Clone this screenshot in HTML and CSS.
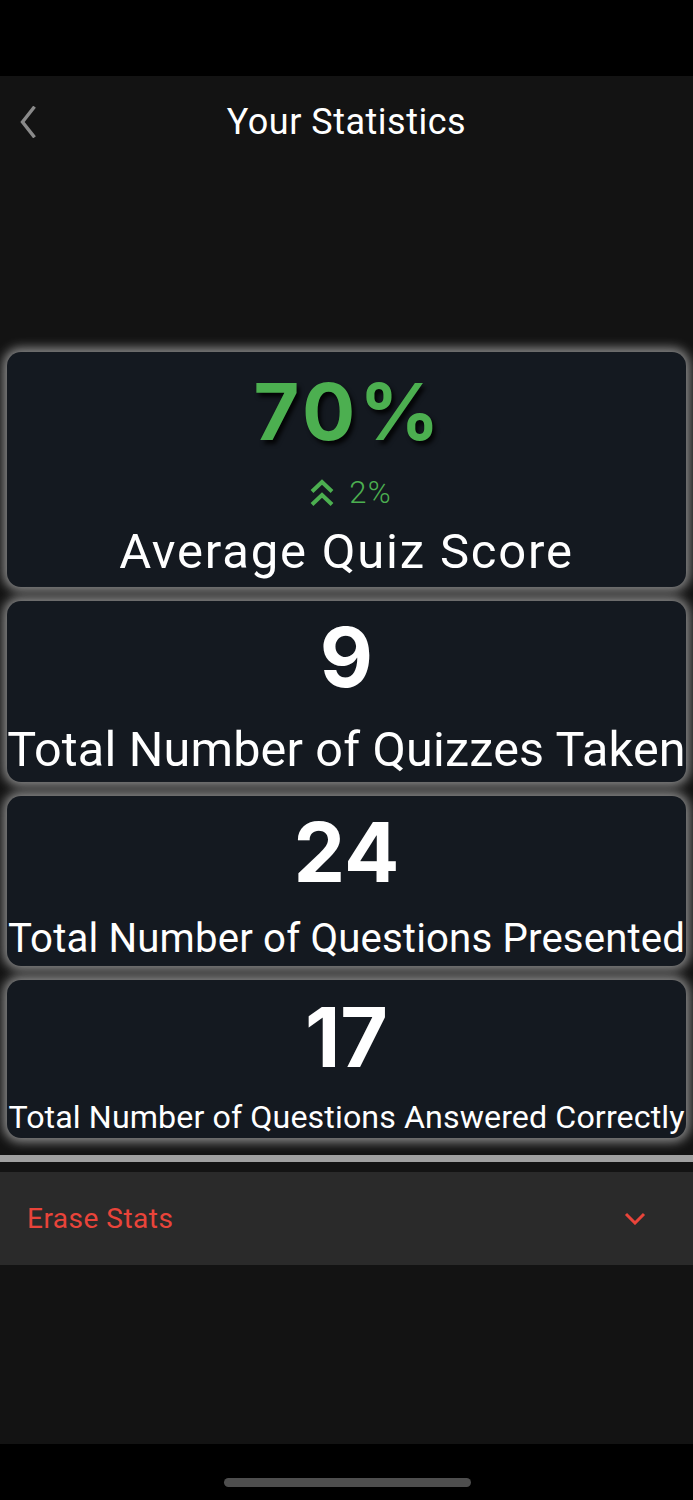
FILE: index.html
```html
<!DOCTYPE html>
<html>
<head>
<meta charset="utf-8">
<link rel="stylesheet" href="styles.css">
</head>
<body>
<div class="page">
  <div class="statusbar"></div>
  <header class="navbar">
    <div class="nav-left">
      <svg class="back" width="16" height="32" viewBox="0 0 16 32"><polyline points="13.5,2 2.5,16 13.5,30" fill="none" stroke="#8a8a8a" stroke-width="3.4" stroke-linecap="square"/></svg>
    </div>
    <div class="nav-title">Your Statistics</div>
    <div class="nav-right"></div>
  </header>
  <section class="stats">
    <div class="card card-1">
      <div class="num num-green">70%</div>
      <div class="trend">
        <svg class="trend-icon" width="26" height="28" viewBox="0 0 26 28"><polyline points="3,12.5 13,3 23,12.5" fill="none" stroke="#4caf50" stroke-width="4"/><polyline points="3,25.5 13,16 23,25.5" fill="none" stroke="#4caf50" stroke-width="4"/></svg>
        <span>2%</span>
      </div>
      <div class="label label-1">Average Quiz Score</div>
    </div>
    <div class="card card-2">
      <div class="num">9</div>
      <div class="label label-2">Total Number of Quizzes Taken</div>
    </div>
    <div class="card card-3">
      <div class="num">24</div>
      <div class="label label-3">Total Number of Questions Presented</div>
    </div>
    <div class="card card-4">
      <div class="num">17</div>
      <div class="label label-4">Total Number of Questions Answered Correctly</div>
    </div>
  </section>
  <div class="divider"></div>
  <div class="erase-row">
    <span class="erase-text">Erase Stats</span>
    <svg class="erase-chev" width="22" height="13" viewBox="0 0 22 13"><polyline points="2,2 11,11 20,2" fill="none" stroke="#e9443a" stroke-width="3"/></svg>
  </div>
  <div class="filler"></div>
  <div class="homebar"><div class="home-indicator"></div></div>
</div>
</body>
</html>
```

FILE: styles.css
```css
* { box-sizing: border-box; }
html, body {
  margin: 0;
  padding: 0;
  background: #131313;
}
.page {
  width: 693px;
  height: 1500px;
  display: flex;
  flex-direction: column;
  background: #131313;
  font-family: Roboto, "Liberation Sans", sans-serif;
  color: #ffffff;
  overflow: hidden;
}
.statusbar {
  height: 76px;
  flex: none;
  background: #000;
}
.navbar {
  height: 92px;
  flex: none;
  display: grid;
  grid-template-columns: 1fr auto 1fr;
  align-items: start;
}
.nav-left {
  padding: 30px 0 0 20px;
}
.back { display: block; }
.nav-title {
  padding-top: 25px;
  font-size: 36px;
  line-height: 42px;
  font-weight: 400;
  letter-spacing: 0.5px;
  color: #fff;
}
.stats {
  flex: none;
  padding: 184px 7px 17px;
  display: flex;
  flex-direction: column;
  gap: 14px;
}
.card {
  background: #141920;
  border-radius: 14px;
  box-shadow: 0 0 11px 4px #8c8c8c;
  display: flex;
  flex-direction: column;
  align-items: center;
  text-align: center;
}
.card-1 { height: 235px; padding-top: 20px; }
.card-2 { height: 181px; padding-top: 16px; }
.card-3 { height: 170px; padding-top: 16px; }
.card-4 { height: 158px; padding-top: 17px; }
.num {
  font-family: Inter, Roboto, sans-serif;
  font-weight: 700;
  font-size: 82px;
  line-height: 82px;
  color: #fff;
}
.num-green {
  font-size: 79px;
  line-height: 79px;
  color: #4caf50;
  letter-spacing: 4px;
  margin-right: -4px;
  text-shadow: 3px 4px 4px rgba(0, 0, 0, 0.85);
}
.trend {
  margin-top: 24px;
  display: flex;
  align-items: center;
  gap: 14px;
  height: 36px;
  color: #4caf50;
  font-size: 31px;
  line-height: 36px;
  font-weight: 300;
  letter-spacing: 1.2px;
  margin-left: 8px;
}
.trend-icon { display: block; }
.label {
  white-space: nowrap;
  line-height: 1.2;
  font-weight: 400;
  color: #fff;
}
.label-1 { font-size: 49px; margin-top: 12px; letter-spacing: 1.8px; }
.label-2 { font-size: 48.5px; margin-top: 22px; letter-spacing: 0.2px; }
.label-3 { font-size: 40.2px; margin-top: 21px; letter-spacing: 0.15px; }
.label-4 { font-size: 32.2px; margin-top: 19px; letter-spacing: 0.1px; }
.divider {
  height: 7px;
  flex: none;
  background: #a0a0a0;
}
.erase-row {
  margin-top: 10px;
  height: 93px;
  flex: none;
  background: #2a2a2a;
  display: flex;
  align-items: center;
  justify-content: space-between;
  padding: 0 47px 0 27px;
}
.erase-text {
  color: #e9443a;
  font-size: 28px;
  letter-spacing: 0.5px;
  font-weight: 400;
}
.erase-chev { display: block; }
.filler {
  flex: 1;
  background: #131313;
}
.homebar {
  height: 56px;
  flex: none;
  background: #000;
  position: relative;
}
.home-indicator {
  position: absolute;
  left: 224px;
  top: 34px;
  width: 247px;
  height: 9px;
  border-radius: 5px;
  background: #4e4e4e;
}
```
